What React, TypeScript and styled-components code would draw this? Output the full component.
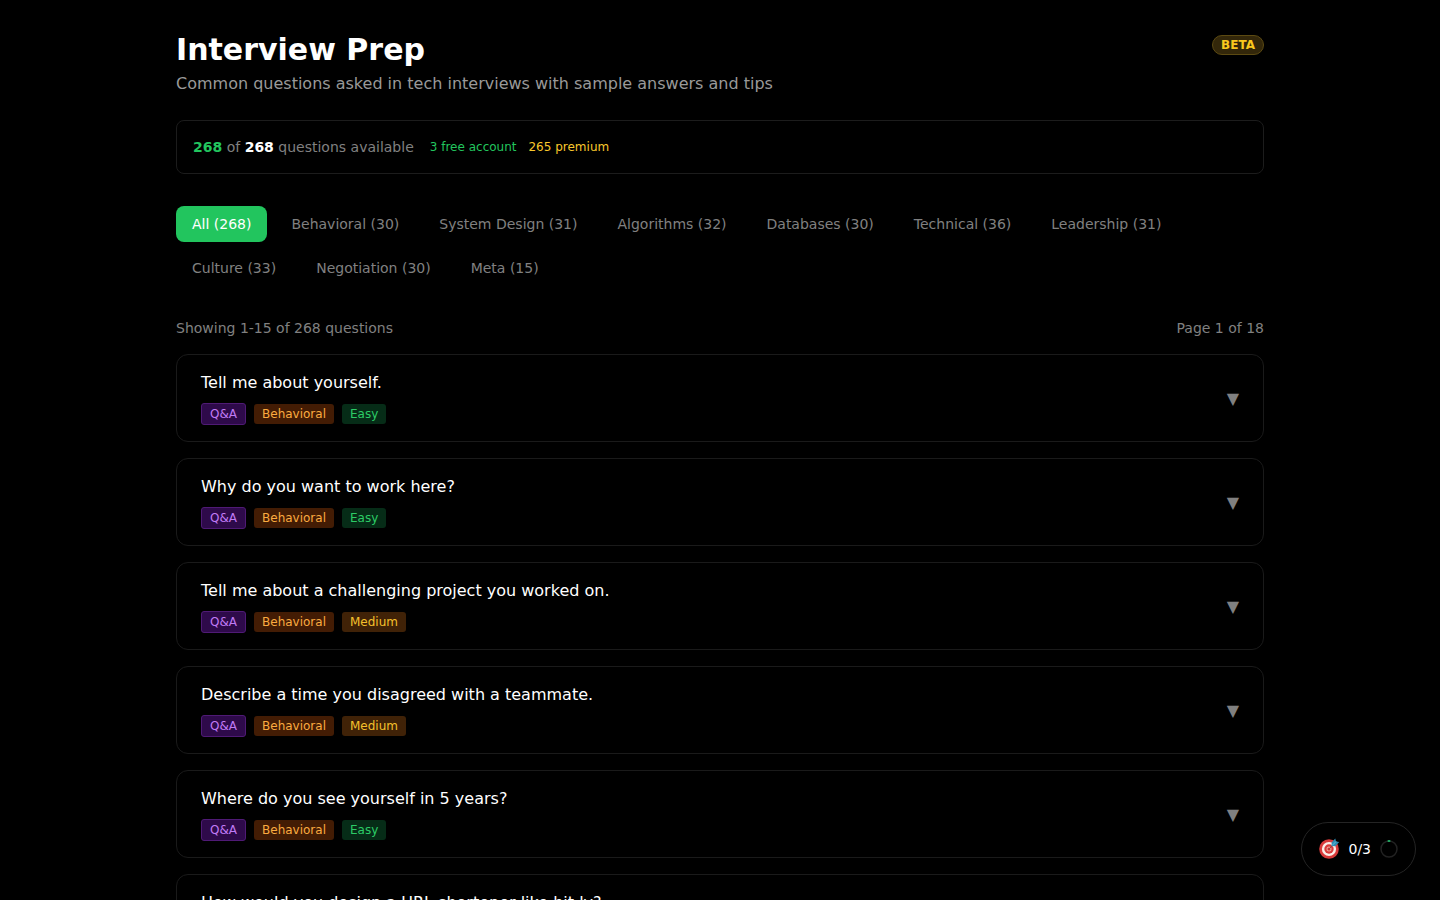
import React, { useState } from "react";
import styled, { createGlobalStyle, css } from "styled-components";

const GlobalStyle = createGlobalStyle`
  *, *::before, *::after { box-sizing: border-box; }
  body {
    margin: 0;
    background: #000;
    color: #fff;
    font-family: "DejaVu Sans", sans-serif;
    font-size: 16px;
    line-height: 24px;
    overflow-x: hidden;
  }
  html { scrollbar-width: none; }
  button { font-family: inherit; cursor: pointer; }
`;

const Page = styled.main`
  max-width: 1152px;
  margin: 0 auto;
  padding: 32px;
`;

const Header = styled.header`
  display: flex;
  justify-content: space-between;
  align-items: flex-start;
  margin-bottom: 24px;
`;

const Title = styled.h1`
  margin: 0 0 4px;
  font-size: 30px;
  line-height: 36px;
  font-weight: 700;
`;

const Subtitle = styled.p`
  margin: 0;
  color: #999;
`;

const BetaBadge = styled.span`
  margin-top: 3px;
  padding: 1px 8px;
  border: 1px solid #5c4a12;
  border-radius: 10px;
  background: #33270a;
  color: #fac81e;
  font-size: 12px;
  line-height: 16px;
  font-weight: 700;
`;

const Stats = styled.section`
  display: flex;
  align-items: center;
  gap: 16px;
  margin-bottom: 32px;
  padding: 16px;
  border: 1px solid #1c1c1c;
  border-radius: 8px;
  color: #808080;
  font-size: 14px;
  line-height: 20px;
`;

const Count = styled.strong<{ $accent?: boolean }>`
  color: ${(p) => (p.$accent ? "#22c55e" : "#fff")};
`;

const Breakdown = styled.div`
  display: flex;
  gap: 12px;
  font-size: 12px;
  line-height: 16px;
`;

const Plan = styled.span<{ $color: string }>`
  color: ${(p) => p.$color};
`;

const Tabs = styled.nav`
  display: flex;
  flex-wrap: wrap;
  gap: 8px;
  margin-bottom: 32px;
`;

const Tab = styled.button<{ $active: boolean }>`
  padding: 8px 16px;
  border: 0;
  border-radius: 8px;
  background: ${(p) => (p.$active ? "#22c55e" : "transparent")};
  color: ${(p) => (p.$active ? "#fff" : "#808080")};
  font-size: 14px;
  line-height: 20px;
`;

const ListInfo = styled.div`
  display: flex;
  justify-content: space-between;
  margin-bottom: 16px;
  color: #808080;
  font-size: 14px;
  line-height: 20px;
`;

const List = styled.div`
  display: flex;
  flex-direction: column;
  gap: 16px;
`;

const Card = styled.button`
  display: flex;
  align-items: center;
  justify-content: space-between;
  width: 100%;
  padding: 16px 24px;
  border: 1px solid #1a1a1a;
  border-radius: 12px;
  background: #000;
  color: #fff;
  font-size: 16px;
  line-height: 24px;
  text-align: left;
`;

const CardBody = styled.span`
  display: flex;
  flex-direction: column;
  gap: 8px;
`;

const Tags = styled.span`
  display: flex;
  align-items: center;
  gap: 8px;
`;

const tagTones = {
  qa: css`
    border: 1px solid #4f1a75;
    background: #2e0a4a;
    color: #c07af5;
  `,
  category: css`
    background: #431c04;
    color: #fbab40;
  `,
  easy: css`
    background: #062c17;
    color: #2ccb66;
  `,
  medium: css`
    background: #402207;
    color: #f5c02c;
  `,
};

const Tag = styled.span<{ $tone: keyof typeof tagTones }>`
  padding: 2px 8px;
  border-radius: 3px;
  font-size: 12px;
  line-height: 16px;
  ${(p) => tagTones[p.$tone]}
`;

const Arrow = styled.span`
  padding-top: 2px;
  color: #808080;
`;

const GoalButton = styled.button`
  position: fixed;
  right: 24px;
  bottom: 24px;
  display: flex;
  align-items: center;
  gap: 8px;
  height: 54px;
  padding: 0 16px;
  border: 1px solid #242424;
  border-radius: 27px;
  background: #000;
  color: #fff;
  font-size: 14px;
  line-height: 20px;
`;

const categories: [string, number][] = [
  ["All", 268],
  ["Behavioral", 30],
  ["System Design", 31],
  ["Algorithms", 32],
  ["Databases", 30],
  ["Technical", 36],
  ["Leadership", 31],
  ["Culture", 33],
  ["Negotiation", 30],
  ["Meta", 15],
];

type Question = { title: string; category: string; level: "Easy" | "Medium" };

const questions: Question[] = [
  { title: "Tell me about yourself.", category: "Behavioral", level: "Easy" },
  { title: "Why do you want to work here?", category: "Behavioral", level: "Easy" },
  { title: "Tell me about a challenging project you worked on.", category: "Behavioral", level: "Medium" },
  { title: "Describe a time you disagreed with a teammate.", category: "Behavioral", level: "Medium" },
  { title: "Where do you see yourself in 5 years?", category: "Behavioral", level: "Easy" },
  { title: "How would you design a URL shortener like bit.ly?", category: "System Design", level: "Medium" },
];

const TargetIcon = () => (
  <svg width="22" height="24" viewBox="0 0 22 24" aria-hidden="true">
    <circle cx="11" cy="12" r="9.8" fill="#d83a3a" />
    <circle cx="11" cy="12" r="7.1" fill="#fbeee8" />
    <circle cx="11" cy="12" r="4.7" fill="#d93b3b" />
    <circle cx="11" cy="12" r="2.5" fill="#f0a79b" />
    <circle cx="11" cy="12" r="1.5" fill="#cf3030" />
    <path d="M11 12 16 7" stroke="#8b5146" strokeWidth="1" />
    <path d="M13.6 5.4 17.3 1.6 18 4.4 21.2 5.1 17.3 9.2 13.6 9Z" fill="#2f8fb5" />
    <path d="M14.2 8.4 18.2 4.4" stroke="#65bcd8" strokeWidth="1" />
  </svg>
);

const ProgressRing = () => (
  <svg width="20" height="20" viewBox="0 0 20 20" fill="none" aria-hidden="true">
    <circle cx="10" cy="10" r="8" stroke="#222" strokeWidth="1.5" />
    <path d="M9.5 2H10.5" stroke="#22a862" strokeWidth="2" strokeLinecap="round" />
  </svg>
);

export default function App() {
  const [active, setActive] = useState("All");
  return (
    <>
      <GlobalStyle />
      <Page>
        <Header>
          <div>
            <Title>Interview Prep</Title>
            <Subtitle>Common questions asked in tech interviews with sample answers and tips</Subtitle>
          </div>
          <BetaBadge>BETA</BetaBadge>
        </Header>
        <Stats>
          <span>
            <Count $accent>268</Count> of <Count>268</Count> questions available
          </span>
          <Breakdown>
            <Plan $color="#22c55e">3 free account</Plan>
            <Plan $color="#fac82c">265 premium</Plan>
          </Breakdown>
        </Stats>
        <Tabs aria-label="Question categories">
          {categories.map(([name, total]) => (
            <Tab key={name} type="button" $active={name === active} onClick={() => setActive(name)}>
              {`${name} (${total})`}
            </Tab>
          ))}
        </Tabs>
        <ListInfo>
          <span>Showing 1-15 of 268 questions</span>
          <span>Page 1 of 18</span>
        </ListInfo>
        <List>
          {questions.map((q) => (
            <Card key={q.title} type="button">
              <CardBody>
                <span>{q.title}</span>
                <Tags>
                  <Tag $tone="qa">Q&amp;A</Tag>
                  <Tag $tone="category">{q.category}</Tag>
                  <Tag $tone={q.level === "Easy" ? "easy" : "medium"}>{q.level}</Tag>
                </Tags>
              </CardBody>
              <Arrow>▼</Arrow>
            </Card>
          ))}
        </List>
      </Page>
      <GoalButton type="button">
        <TargetIcon />
        <span>0/3</span>
        <ProgressRing />
      </GoalButton>
    </>
  );
}
